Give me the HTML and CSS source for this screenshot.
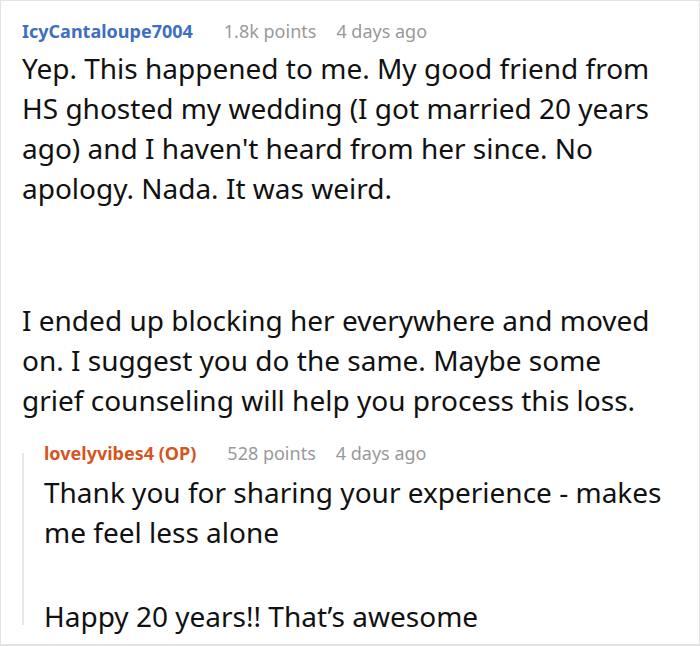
FILE: index.html
```html
<!DOCTYPE html>
<html>
<head>
<meta charset="utf-8">
<link rel="stylesheet" href="styles.css">
</head>
<body>
<div class="frame">
  <div class="comment">
    <div class="meta">
      <span class="user">IcyCantaloupe7004</span>
      <span class="info">1.8k points</span>
      <span class="info">4 days ago</span>
    </div>
    <div class="text main">
      <p class="para">Yep. This happened to me. My good friend from HS ghosted my wedding (I got married 20 years ago) and I haven't heard from her since. No apology. Nada. It was weird.</p>
      <p class="para gap-lg">I ended up blocking her everywhere and moved on. I suggest you do the same. Maybe some grief counseling will help you process this loss.</p>
    </div>
    <div class="reply">
      <div class="meta">
        <span class="user op">lovelyvibes4 (OP)</span>
        <span class="info">528 points</span>
        <span class="info">4 days ago</span>
      </div>
      <div class="text">
        <p class="para">Thank you for sharing your experience - makes me feel less alone</p>
        <p class="para gap-sm">Happy 20 years!! That’s awesome</p>
      </div>
    </div>
  </div>
</div>
</body>
</html>
```
FILE: styles.css
```css
html, body {
  margin: 0;
  padding: 0;
  background: #fff;
}
.frame {
  width: 700px;
  height: 646px;
  box-sizing: border-box;
  border: 1px solid #e3e3e3;
  border-bottom-width: 2px;
  overflow: hidden;
  font-family: "Noto Sans", "Open Sans", sans-serif;
}
.comment {
  padding: 18px 4px 0 21px;
}
.meta {
  display: flex;
  align-items: baseline;
  gap: 20px;
  font-size: 18px;
  line-height: 24px;
}
.user {
  font-weight: 700;
  color: #3d6fc1;
  margin-right: 11px;
}
.user.op {
  color: #d4561f;
}
.info {
  color: #999;
}
.text {
  font-size: 28px;
  line-height: 40px;
  color: #111;
  margin-top: 5px;
}
.text.main {
  margin-right: 36px;
}
.para {
  margin: 0;
}
.gap-lg {
  margin-top: 92px;
}
.gap-sm {
  margin-top: 44px;
}
.reply {
  position: relative;
  margin-top: 21px;
  padding-left: 22px;
}
.reply::before {
  content: "";
  position: absolute;
  left: 0;
  top: 12px;
  bottom: 11px;
  width: 2px;
  background: #e8e8e8;
}
.reply .text {
  margin-top: 7px;
}
```
